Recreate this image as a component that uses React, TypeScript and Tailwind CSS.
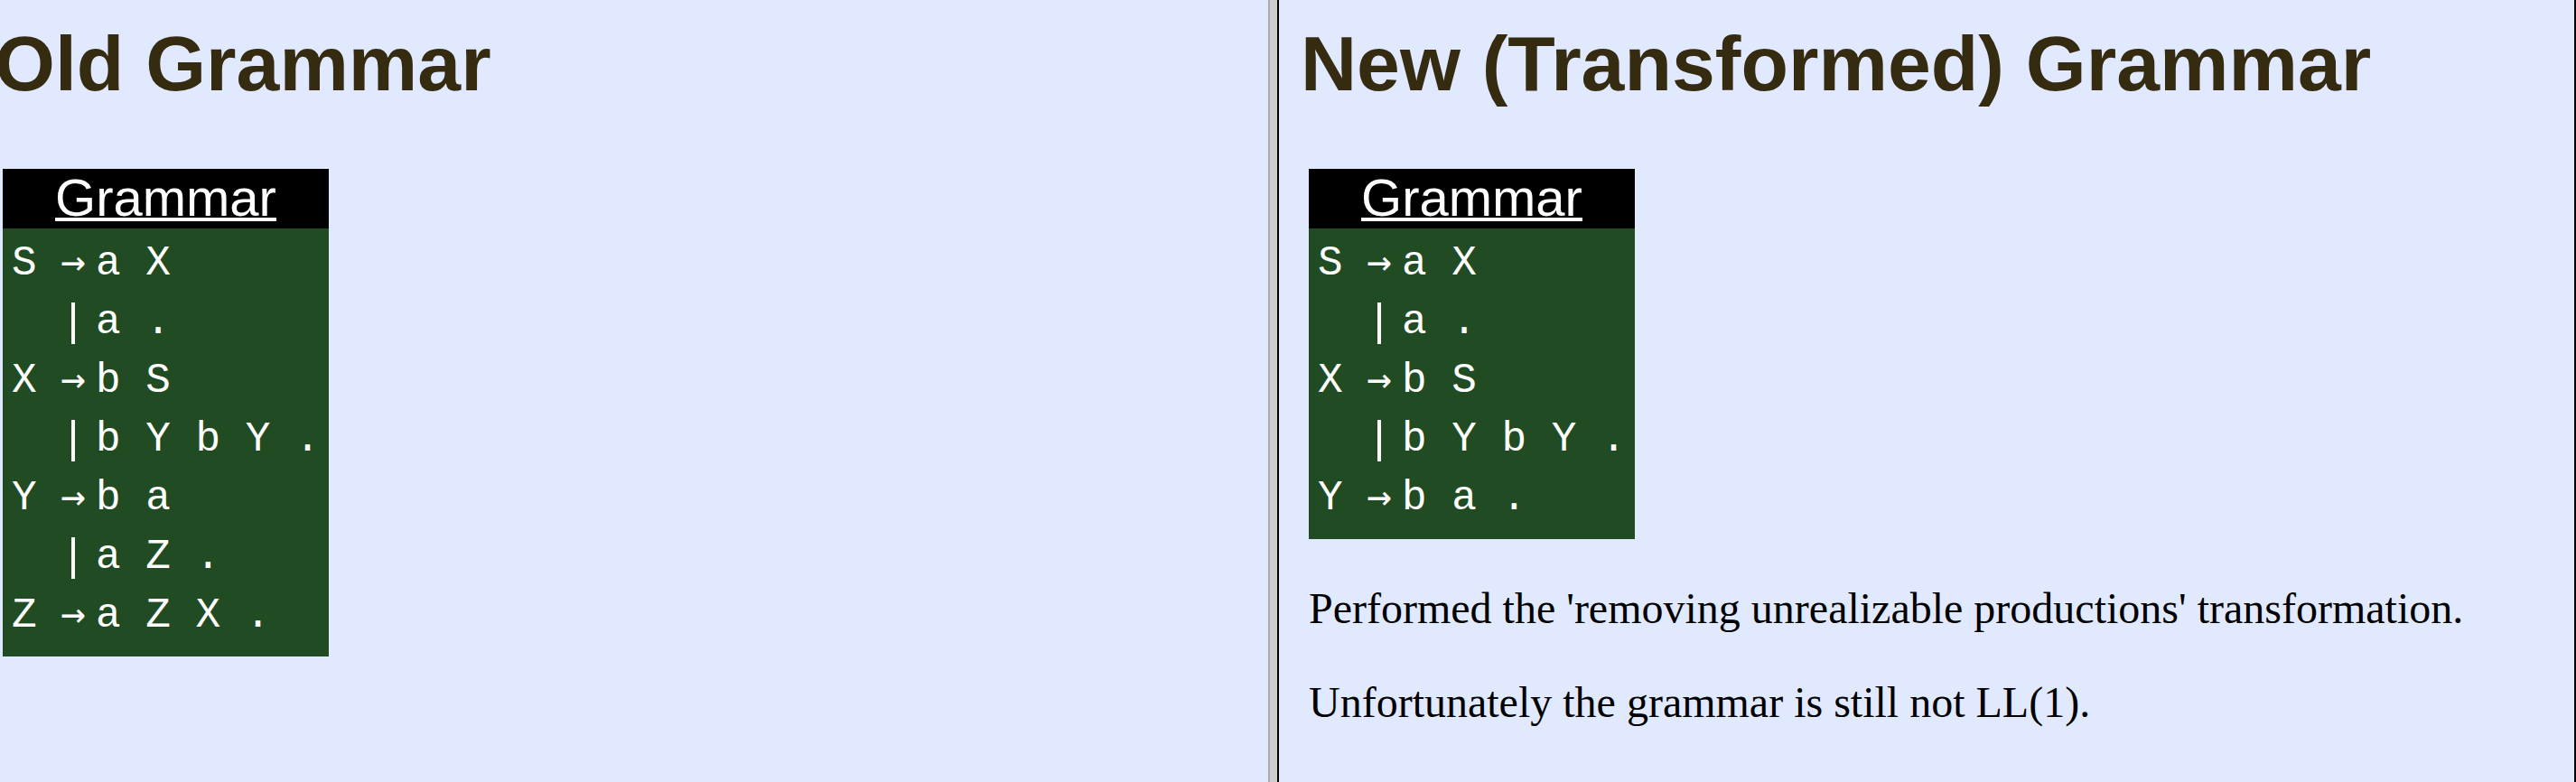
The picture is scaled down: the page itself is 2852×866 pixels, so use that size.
type Production = { head: string; body: string };

const oldGrammar: Production[] = [
  { head: "S", body: "a X" },
  { head: "", body: "a ." },
  { head: "X", body: "b S" },
  { head: "", body: "b Y b Y ." },
  { head: "Y", body: "b a" },
  { head: "", body: "a Z ." },
  { head: "Z", body: "a Z X ." },
];

const newGrammar: Production[] = [
  { head: "S", body: "a X" },
  { head: "", body: "a ." },
  { head: "X", body: "b S" },
  { head: "", body: "b Y b Y ." },
  { head: "Y", body: "b a ." },
];

function Heading({ children }: { children: string }) {
  return (
    <h1 className="pt-5 text-[86px] leading-[100px] font-bold whitespace-nowrap text-[#352b10] font-['Liberation_Sans',sans-serif]">
      {children}
    </h1>
  );
}

function GrammarTable({ rows }: { rows: Production[] }) {
  return (
    <div className="mt-[67px] ml-[9px] w-fit bg-[#214c23] pb-3 text-white">
      <table className="border-collapse">
        <caption className="mb-[7px] bg-black pb-0.5 text-center text-[58px] leading-[64px] underline decoration-4 underline-offset-2 [text-decoration-skip-ink:none] font-['Liberation_Sans',sans-serif]">
          Grammar
        </caption>
        <tbody className="text-[46px] leading-[65px] font-['Liberation_Mono',monospace]">
          {rows.map((row, i) => (
            <tr key={i} className="h-[65px]">
              <td className="w-[54px] p-0 pl-2.5 align-top whitespace-pre">{row.head}</td>
              {row.head ? (
                <td className="w-[48px] p-0 text-center align-top leading-[58px] font-['DejaVu_Sans_Mono',monospace]">→</td>
              ) : (
                <td className="w-[48px] p-0 text-center align-top text-[50px] leading-[58px] font-['Liberation_Sans',sans-serif]">|</td>
              )}
              <td className="w-[259px] p-0 pl-px align-top whitespace-nowrap">{row.body}</td>
            </tr>
          ))}
        </tbody>
      </table>
    </div>
  );
}

export default function App() {
  return (
    <div className="flex min-h-screen bg-[#e1e9fe] text-black">
      <section className="w-[1404px] shrink grow-0 overflow-hidden">
        <div className="-ml-1.5">
          <Heading>Old Grammar</Heading>
          <GrammarTable rows={oldGrammar} />
        </div>
      </section>
      <div className="w-3 shrink-0 border-r-2 border-l-2 border-r-black border-l-[#aaaaaa] bg-[#cecece]" />
      <section className="min-w-0 flex-1 overflow-hidden border-r-2 border-black pl-6">
        <Heading>New (Transformed) Grammar</Heading>
        <GrammarTable rows={newGrammar} />
        <div className="mt-[49px] ml-[9px] flex flex-col gap-12 text-[48px] leading-[56px] font-['Liberation_Serif',serif]">
          <p>Performed the 'removing unrealizable productions' transformation.</p>
          <p>Unfortunately the grammar is still not LL(1).</p>
        </div>
      </section>
    </div>
  );
}
